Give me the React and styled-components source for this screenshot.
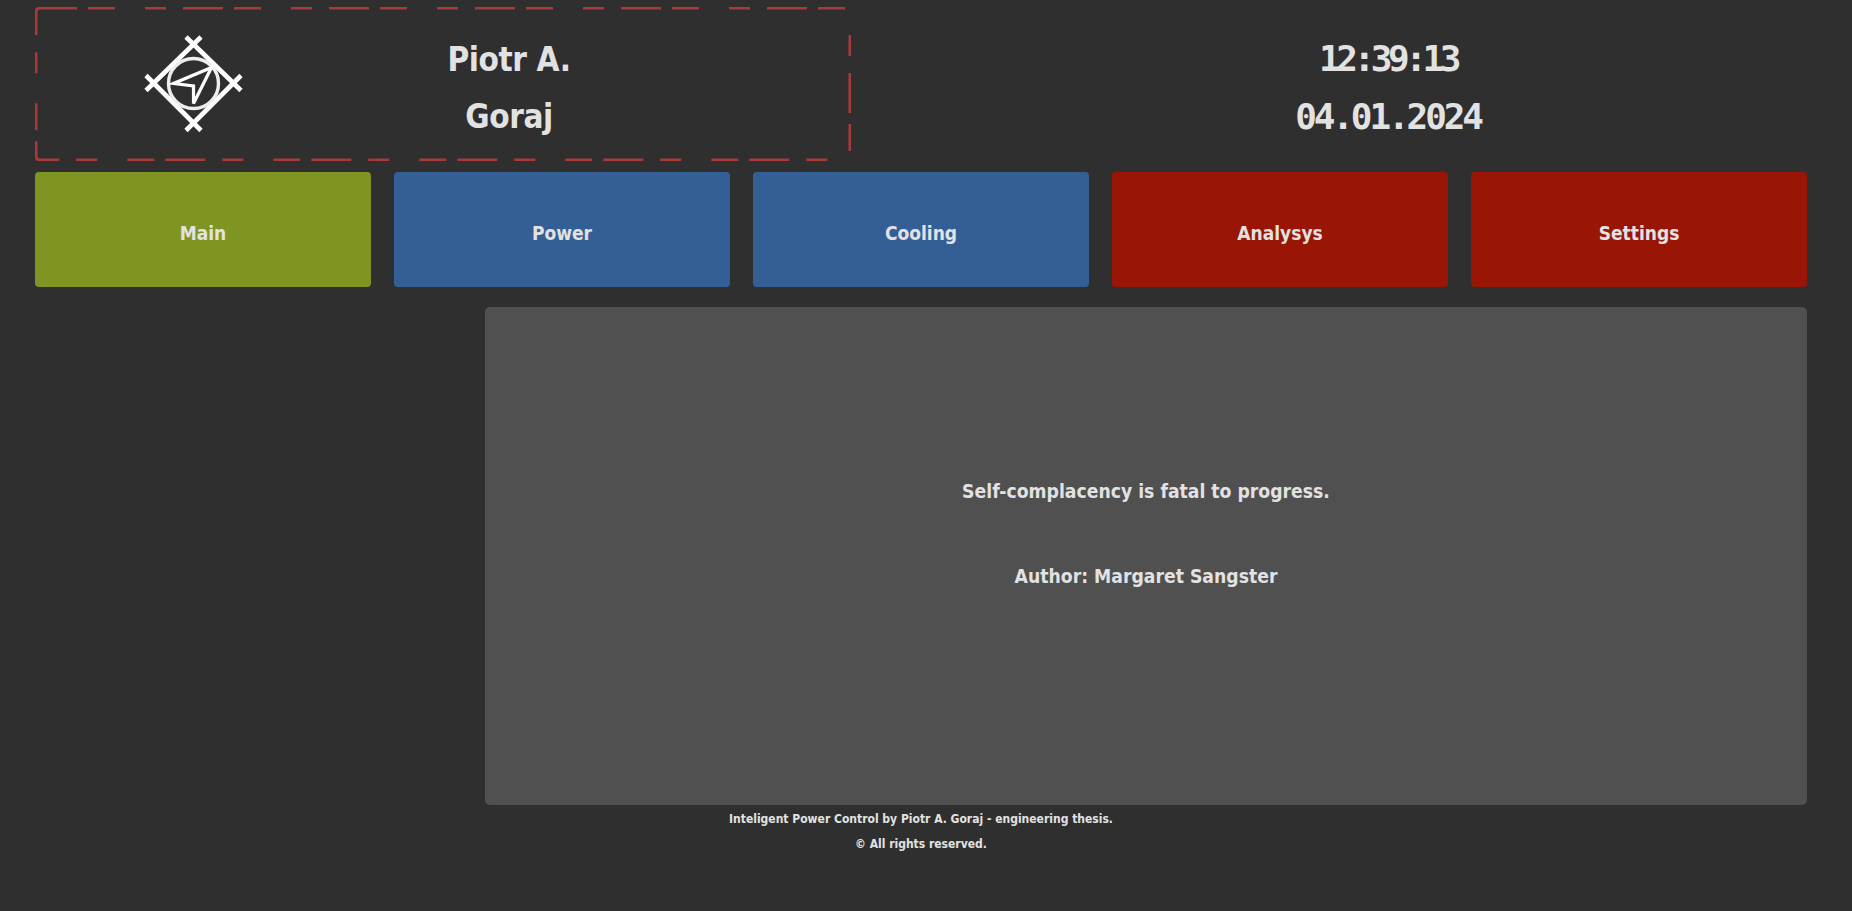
import React from "react";
import styled, { createGlobalStyle } from "styled-components";

const Global = createGlobalStyle`
  html, body { margin: 0; padding: 0; background: #2f2f2f; }
  body { font-family: "DejaVu Sans", "Liberation Sans", sans-serif; font-stretch: condensed; color: #e2e2e2; }
`;

const Page = styled.div`
  box-sizing: border-box;
  width: 1852px;
  height: 911px;
  padding: 7px 45px 0 35px;
  overflow: hidden;
`;

const Header = styled.header`
  display: grid;
  grid-template-columns: 816px 1fr;
  height: 154px;
`;

const Identity = styled.div`
  position: relative;
  display: grid;
  grid-template-columns: 316px 316px 1fr;
  align-items: center;
`;

const Frame = styled.svg`
  position: absolute;
  left: 0;
  top: 0;
  width: 816px;
  height: 154px;
  fill: none;
  stroke: #a83a3a;
  stroke-width: 3;
  stroke-dasharray: 40 11 27 30 21 17;
  stroke-dashoffset: 3;
`;

const LogoCell = styled.div`
  display: flex;
  justify-content: center;
`;

const Name = styled.div`
  padding-top: 7px;
  font-size: 33px;
  font-weight: 700;
  line-height: 57px;
  letter-spacing: -0.4px;
  text-align: center;
`;

const Clock = styled.div`
  padding: 7px 0 0 118px;
  display: flex;
  flex-direction: column;
  justify-content: center;
  align-items: center;
  font-family: "DejaVu Sans Mono", monospace;
  font-weight: 700;
  font-size: 36px;
  line-height: 58px;
`;

const Digits = styled.div`
  letter-spacing: ${(p) => p.$spacing}px;
`;

const Nav = styled.nav`
  display: grid;
  grid-template-columns: repeat(5, 336px);
  column-gap: 23px;
  margin-top: 11px;
`;

const NavButton = styled.div`
  height: 115px;
  border-radius: 4px;
  background: ${(p) => p.$color};
  display: flex;
  align-items: center;
  justify-content: center;
  padding-top: 6px;
  box-sizing: border-box;
  font-size: 19px;
  font-weight: 700;
`;

const Content = styled.main`
  display: grid;
  grid-template-columns: 450px 1322px;
  margin-top: 20px;
`;

const Quote = styled.section`
  grid-column: 2;
  height: 498px;
  border-radius: 5px;
  background: #505050;
  display: flex;
  flex-direction: column;
  align-items: center;
  padding-top: 167px;
  box-sizing: border-box;
  font-size: 19.2px;
  font-weight: 700;
  line-height: 36px;
`;

const QuoteLine = styled.p`
  margin: 0 0 49px;
`;

const Footer = styled.footer`
  margin-top: 2px;
  text-align: center;
  font-size: 12px;
  font-weight: 700;
  line-height: 25px;
`;

const Logo = () => (
  <svg width="130" height="115" viewBox="3.5 1.5 130 115" fill="none" stroke="#fff">
    <g strokeWidth="4.6">
      <path d="M21.5 65 L76.5 11.5" />
      <path d="M61.5 11.5 L116.5 65" />
      <path d="M21.5 50 L76.5 105" />
      <path d="M116.5 50 L61.5 105" />
    </g>
    <circle cx="69" cy="58" r="25" strokeWidth="3.4" stroke="#eee" />
    <path d="M87 42 L49 58 L69 60.5 L69 78 Z" strokeWidth="3.2" strokeLinejoin="miter" />
  </svg>
);

const tabs = [
  ["Main", "#7f9523"],
  ["Power", "#335f96"],
  ["Cooling", "#335f96"],
  ["Analysys", "#991505"],
  ["Settings", "#991505"],
];

export default function App() {
  return (
    <Page>
      <Global />
      <Header>
        <Identity>
          <Frame viewBox="0 0 816 154">
            <rect x="1" y="1" width="814" height="152" rx="4" />
          </Frame>
          <LogoCell>
            <Logo />
          </LogoCell>
          <Name>
            Piotr A.
            <br />
            Goraj
          </Name>
        </Identity>
        <Clock>
          <Digits $spacing={-4.4}>12:39:13</Digits>
          <Digits $spacing={-3.1}>04.01.2024</Digits>
        </Clock>
      </Header>
      <Nav>
        {tabs.map(([label, color]) => (
          <NavButton key={label} $color={color}>
            {label}
          </NavButton>
        ))}
      </Nav>
      <Content>
        <Quote>
          <QuoteLine>Self-complacency is fatal to progress.</QuoteLine>
          <QuoteLine>Author: Margaret Sangster</QuoteLine>
        </Quote>
      </Content>
      <Footer>
        Inteligent Power Control by Piotr A. Goraj - engineering thesis.
        <br />© All rights reserved.
      </Footer>
    </Page>
  );
}
